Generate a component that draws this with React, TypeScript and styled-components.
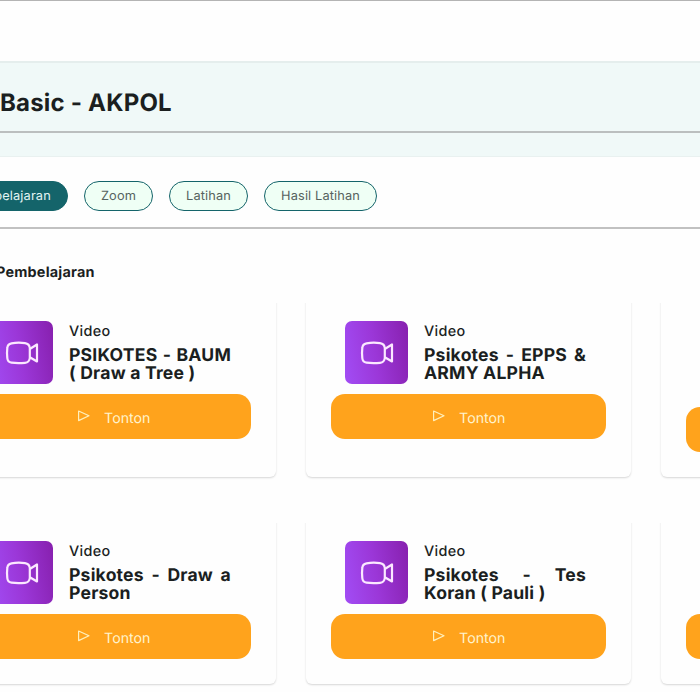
import React from "react";
import styled, { createGlobalStyle } from "styled-components";

const GlobalStyle = createGlobalStyle`
  *, *::before, *::after { box-sizing: border-box; }
  body {
    margin: 0;
    background: #fefefe;
    color: #1b1f1f;
    font-family: Inter, "Liberation Sans", sans-serif;
    text-rendering: geometricPrecision;
    overflow: hidden;
  }
  h1, h2, h3, p { margin: 0; }
`;

const Page = styled.div`
  width: 700px;
  height: 692px;
  overflow: hidden;
`;

const TopBar = styled.header`
  height: 61px;
  border-top: 1px solid #b4b4b4;
`;

const Banner = styled.section`
  height: 96px;
  background: #f0f9f8;
  border-top: 2px solid #e5eeed;
  border-bottom: 1px solid #e9f1f0;
`;

const BannerTitle = styled.div`
  height: 70px;
  padding-top: 24px;
  border-bottom: 2px solid #bbbfbf;
`;

const Title = styled.h1`
  font-size: 24px;
  line-height: 32px;
  font-weight: 750;
  letter-spacing: 0.2px;
  white-space: nowrap;
`;

const Tabs = styled.nav`
  display: flex;
  gap: 16px;
  height: 72px;
  padding-top: 24px;
  margin-left: -52px;
  border-bottom: 2px solid #c1c1c1;
`;

const Tab = styled.button<{ $width: number; $active?: boolean }>`
  flex: none;
  width: ${(p) => p.$width}px;
  height: 30px;
  padding: 1px 0 0 ${(p) => (p.$active ? 2 : 0)}px;
  border: 1px solid #14646a;
  border-radius: 15px;
  background: ${(p) => (p.$active ? "#14646a" : "#effff5")};
  color: ${(p) => (p.$active ? "#e3f4f3" : "#56635f")};
  font: 400 12.8px/20px Inter, sans-serif;
  letter-spacing: 0.12px;
  text-rendering: geometricPrecision;
`;

const Heading = styled.h2`
  margin: 34px 0 14px -4px;
  font-size: 14.4px;
  line-height: 20px;
  font-weight: 650;
  letter-spacing: 0.22px;
`;

const Grid = styled.main`
  display: grid;
  grid-template-columns: repeat(3, 325px);
  grid-template-rows: 180px 167px;
  gap: 40px 30px;
  width: 1035px;
  margin-left: -49px;
`;

const Card = styled.article`
  display: flex;
  flex-direction: column;
  padding: 24px 25px 0;
  border-radius: 6px;
  background: #fefefe;
  box-shadow: 0 0.5px 2px rgba(0, 0, 0, 0.16);
  clip-path: inset(6px -4px -4px -4px);
`;

const CardTop = styled.div<{ $height: number }>`
  display: flex;
  gap: 16px;
  height: ${(p) => p.$height}px;
  padding: 0 20px 0 14px;
`;

const Thumb = styled.div`
  display: grid;
  place-items: center;
  flex: none;
  width: 63px;
  height: 63px;
  border-radius: 7px;
  background: linear-gradient(80deg, #a24df5 0%, #9b37d8 48%, #8720ae 100%);
`;

const Info = styled.div`
  flex: 1;
  min-width: 0;
  padding-top: 1px;
`;

const Kind = styled.p`
  font-size: 14.4px;
  line-height: 20px;
  font-weight: 500;
  letter-spacing: 0.35px;
`;

const Name = styled.h3`
  margin-top: 5px;
  font-size: 17.6px;
  line-height: 18px;
  font-weight: 700;
  letter-spacing: 0.2px;
  text-align: justify;
`;

const Watch = styled.button`
  display: flex;
  align-items: center;
  justify-content: center;
  gap: 14px;
  height: 45px;
  padding: 0;
  border: 0;
  border-radius: 14px;
  background: #ffa31c;
  color: #fff3cd;
  font: 400 14.2px/20px Inter, sans-serif;
  text-rendering: geometricPrecision;

  svg { margin: -2px 0 0 0.5px; }
  span { padding-top: 5px; }
`;

const VideoIcon = () => (
  <svg width="34" height="26" viewBox="0 0 34 26" fill="none" stroke="#fbe8ff" strokeWidth="2.2" strokeLinejoin="round">
    <path d="M6.5 3.3Q13 2.2 20 3.1Q24.4 3.7 24.8 8V18Q24.4 22.3 20 22.8Q13 23.6 6.5 22.7Q2.6 22.1 2.3 18Q1.7 13 2.3 8Q2.6 4 6.5 3.3Z" />
    <path d="M24.8 9L32 4.5V21.5L24.8 17.2" />
  </svg>
);

const PlayIcon = () => (
  <svg width="13" height="12" viewBox="0 0 13 12" fill="none" stroke="#fff0bd" strokeWidth="1.2" strokeLinejoin="round">
    <path d="M1.6 1L12 5.7L1.6 10.6Z" />
  </svg>
);

const lessons = [
  { name: "PSIKOTES - BAUM ( Draw a Tree )", top: 73 },
  { name: "Psikotes - EPPS & ARMY ALPHA", top: 73 },
  { name: "", top: 86 },
  { name: "Psikotes - Draw a Person", top: 73 },
  { name: "Psikotes - Tes Koran ( Pauli )", top: 73 },
  { name: "", top: 73 },
];

export default function App() {
  return (
    <Page>
      <GlobalStyle />
      <TopBar />
      <Banner>
        <BannerTitle>
          <Title>Basic - AKPOL</Title>
        </BannerTitle>
      </Banner>
      <Tabs>
        <Tab $width={120} $active>Pembelajaran</Tab>
        <Tab $width={69}>Zoom</Tab>
        <Tab $width={79}>Latihan</Tab>
        <Tab $width={113}>Hasil Latihan</Tab>
      </Tabs>
      <Heading>Pembelajaran</Heading>
      <Grid>
        {lessons.map((lesson, i) => (
          <Card key={i}>
            <CardTop $height={lesson.top}>
              {lesson.name && (
                <>
                  <Thumb><VideoIcon /></Thumb>
                  <Info>
                    <Kind>Video</Kind>
                    <Name>{lesson.name}</Name>
                  </Info>
                </>
              )}
            </CardTop>
            <Watch>
              <PlayIcon />
              <span>Tonton</span>
            </Watch>
          </Card>
        ))}
      </Grid>
    </Page>
  );
}
